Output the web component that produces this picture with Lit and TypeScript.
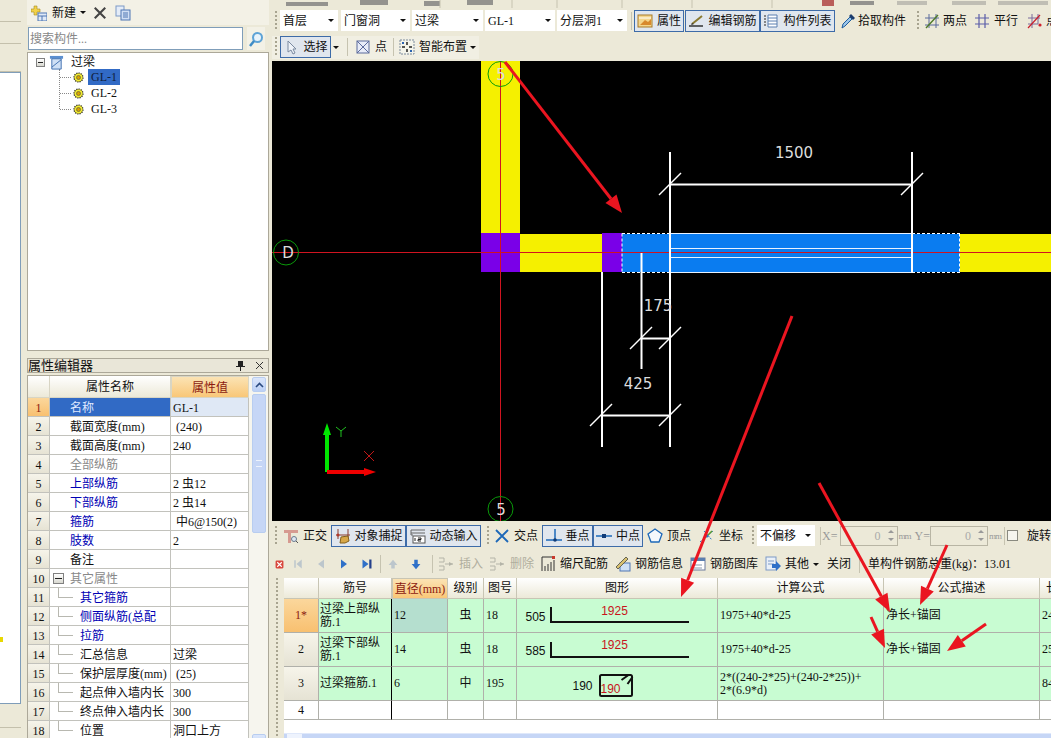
import { LitElement, html, css, svg } from 'lit';
import { customElement } from 'lit/decorators.js';

// small 16x16 toolbar glyphs
const ic = (body: unknown, w = 16, h = 16) => html`<svg class="ic" width=${w} height=${h} viewBox="0 0 16 16">${body}</svg>`;

const icons: Record<string, unknown> = {
  add: svg`<path d="M3 1h3v3h3v3H6v3H3V7H0V4h3z" fill="#f2d24a" stroke="#a58a20" stroke-width=".6"/><rect x="7" y="8" width="9" height="8" fill="#dfe9f7" stroke="#4f77b3"/><path d="M7 11h9M11 11v5" stroke="#4f77b3"/>`,
  del: svg`<path d="M2 2l12 12M14 2L2 14" stroke="#444" stroke-width="2.4"/>`,
  copy: svg`<rect x="1" y="1" width="8" height="10" fill="#e4ecf8" stroke="#7d9ac6"/><rect x="6" y="5" width="9" height="10" fill="#cfdef4" stroke="#4f77b3"/><path d="M8 8h5M8 10h5M8 12h5" stroke="#4f77b3"/>`,
  search: svg`<circle cx="9.500" cy="6.500" r="4.500" fill="#e8f3fb" stroke="#5ea3d6" stroke-width="2"/><path d="M6 10l-4 5" stroke="#3f8cc6" stroke-width="2.500"/>`,
  beam: svg`<rect x="1" y="1" width="14" height="3" fill="#5b8fd0"/><path d="M3 4h10v11H3z" fill="#cfe0f5" stroke="#3f6fb0"/><path d="M3 13L13 5" stroke="#3f6fb0"/>`,
  gear: svg`<circle cx="8" cy="8" r="5.500" fill="#f5ee30" stroke="#333" stroke-width="1.600" stroke-dasharray="1.600 1.200"/><circle cx="8" cy="8" r="2.500" fill="#d8a000" stroke="#554" stroke-width=".8"/>`,
  prop: svg`<rect x="1" y="2" width="14" height="12" fill="#f4d68c" stroke="#a87a28"/><path d="M3 12l5-5 3 2 3-3v6z" fill="#d8892c"/><path d="M2 5h12" stroke="#fff"/>`,
  edit: svg`<path d="M1 13h14" stroke="#333" stroke-width="1.500"/><path d="M4 11L14 3" stroke="#8a7a30" stroke-width="2"/><path d="M3 12l1-2 2 1z" fill="#333"/>`,
  list: svg`<path d="M5 2h9v12H5z" fill="#fff" stroke="#5b7fb0"/><path d="M5 5h9M5 8h9M5 11h9" stroke="#5b7fb0"/><path d="M1 3h2M1 6h2M1 9h2M1 12h2" stroke="#666" stroke-width="1.500"/>`,
  pick: svg`<path d="M2 15l1-4 7-7 2 2-7 7z" fill="#9cc6ea" stroke="#1d5c9c"/><path d="M9 3l2-2 4 4-2 2z" fill="#1d3c6c"/>`,
  twoPt: svg`<path d="M5 1v14M12 1v14M1 5h14M1 12h14" stroke="#5b6a9c"/><path d="M2 15L14 2" stroke="#4f7a28" stroke-width="1.400"/>`,
  parallel: svg`<path d="M5 1v14M11 1v14M1 5h14M1 11h14" stroke="#5b5ea8" stroke-width="1.200"/>`,
  ptAngle: svg`<path d="M5 1v14M11 1v10M1 5h12M1 11h10" stroke="#7a6a9c"/><path d="M1 15L13 2" stroke="#c8202c" stroke-width="1.200"/><circle cx="13" cy="12" r="1.600" fill="#d0202c"/>`,
  cursor: svg`<path d="M5 2v11l3-2 2 4 2-1-2-4h3z" fill="#eef2f8" stroke="#7a8aa0"/>`,
  point: svg`<rect x="2" y="2" width="12" height="12" fill="#e8ecf8" stroke="#5b6a9c"/><path d="M2 2l12 12M14 2L2 14" stroke="#5b6a9c"/>`,
  smart: svg`<rect x="1" y="1" width="14" height="14" fill="#f4f4ea" stroke="#7a8a9c" stroke-dasharray="2 1"/><path d="M8 3v3M8 10v3M3 8h3M10 8h3" stroke="#222" stroke-width="1.500"/><rect x="3" y="3" width="2" height="2" fill="#2a62b0"/><rect x="11" y="11" width="2" height="2" fill="#2a62b0"/>`,
  ortho: svg`<path d="M1 2h14v3H1zM5 5v10h3V5z" fill="#d69a90"/><circle cx="11" cy="11" r="2.500" fill="#dde6f2" stroke="#6a7a8c"/><path d="M13 13l2 2" stroke="#555"/>`,
  snap: svg`<path d="M3 1v10M13 1v10M1 7h14" stroke="#8a3c2c"/><circle cx="3" cy="7" r="1.500" fill="#b03a2c"/><path d="M5 15l1-6 7-1 1 5-4 2z" fill="#d8a848" stroke="#84601c"/>`,
  dyn: svg`<path d="M1 2h14M1 5h14" stroke="#666"/><rect x="3" y="8" width="12" height="7" fill="#fff" stroke="#555"/><path d="M1 2v5h2" stroke="#666" fill="none"/><path d="M5 10v3M8 10h3v1.500H8V13h3" stroke="#222" fill="none"/>`,
  cross: svg`<path d="M2 2l12 12M14 2L2 14" stroke="#1d68b8" stroke-width="1.800"/>`,
  perp: svg`<path d="M0 12h16" stroke="#1d68b8" stroke-width="1.500"/><path d="M9 1v11" stroke="#1d68b8" stroke-width="1.500"/><circle cx="9" cy="12" r="1.800" fill="#123c78"/>`,
  mid: svg`<path d="M0 8h16" stroke="#1d68b8" stroke-width="1.500"/><rect x="6" y="6" width="4" height="4" fill="#123c78"/>`,
  vertex: svg`<path d="M8 1l7 5-3 8H4L1 6z" fill="#f4f8fc" stroke="#1d68b8" stroke-width="1.300"/>`,
  coord: svg`<path d="M1 14L14 3M5 3l8 9" stroke="#2a78c0" stroke-dasharray="2 1"/><path d="M7 9l6-6" stroke="#5b9a2c" stroke-width="1.500"/><circle cx="8" cy="8" r="1.500" fill="#2a78c0"/>`,
  close: svg`<rect x="1" y="1" width="14" height="14" rx="2" fill="#d8463c"/><path d="M4 4l8 8M12 4l-8 8" stroke="#fff" stroke-width="2"/>`,
  first: svg`<path d="M3 3h2v10H3zM13 2v12L6 8z" fill="#bcc6cc"/>`,
  prev: svg`<path d="M12 2v12L4 8z" fill="#bcc6cc"/>`,
  next: svg`<path d="M4 2v12l8-6z" fill="#2f70c8"/>`,
  last: svg`<path d="M2 2v12l8-6z" fill="#2f70c8"/><path d="M11 2h3v12h-3z" fill="#24408c"/>`,
  up: svg`<path d="M8 3l5 6h-3v4H6V9H3z" fill="#bcc6cc"/>`,
  down: svg`<path d="M6 3h4v5h3l-5 6-5-6h3z" fill="#2f70c8"/>`,
  insert: svg`<path d="M1 2h5v4H1M1 10h5v4H1M7 8h8" stroke="#b4b4a8" fill="none"/><path d="M11 6l4 2-4 2z" fill="#b4b4a8"/>`,
  scale: svg`<path d="M2 1h12M2 1v14M5 15v-5M8 15v-7M11 15v-9M14 15V4" stroke="#333"/><rect x="12" y="0" width="3" height="3" fill="#c8382c"/>`,
  info: svg`<rect x="5" y="7" width="10" height="8" fill="#cfe0f5" stroke="#4f77b3"/><path d="M1 11L11 1l2 2L3 13z" fill="#d8c070" stroke="#665"/>`,
  lib: svg`<rect x="1" y="2" width="14" height="12" fill="#fff" stroke="#6a7a9c"/><path d="M1 2h14v3H1z" fill="#5b7fb0"/><path d="M4 9h8M4 12h8" stroke="#8a9ab0"/>`,
  other: svg`<rect x="1" y="1" width="10" height="13" fill="#eaf0f8" stroke="#7d9ac6"/><path d="M3 5h6M3 8h6" stroke="#7d9ac6"/><path d="M7 8h4V5l5 5-5 5v-3H7z" fill="#2f70c8"/>`,
};

const tool = (name: string, label: string, cls = '') =>
  html`<span class="tool ${cls}">${ic(icons[name])}<span>${label}</span></span>`;
const drop = html`<span class="caret"></span>`;
const grip = (cls = '') => html`<span class="grip ${cls}"></span>`;
const sep = (cls = '') => html`<span class="sep ${cls}"></span>`;

type Prop = { no: number; name: string; value?: string; kind?: string; nested?: boolean };
const props: Prop[] = [
  { no: 1, name: '名称', value: 'GL-1' },
  { no: 2, name: '截面宽度(mm)', value: ' (240)' },
  { no: 3, name: '截面高度(mm)', value: '240' },
  { no: 4, name: '全部纵筋', kind: 'mute' },
  { no: 5, name: '上部纵筋', value: '2 虫12', kind: 'blue' },
  { no: 6, name: '下部纵筋', value: '2 虫14', kind: 'blue' },
  { no: 7, name: '箍筋', value: ' 中6@150(2)', kind: 'blue' },
  { no: 8, name: '肢数', value: '2', kind: 'blue' },
  { no: 9, name: '备注' },
  { no: 10, name: '其它属性', kind: 'mute group' },
  { no: 11, name: '其它箍筋', kind: 'blue', nested: true },
  { no: 12, name: '侧面纵筋(总配', kind: 'blue', nested: true },
  { no: 13, name: '拉筋', kind: 'blue', nested: true },
  { no: 14, name: '汇总信息', value: '过梁', nested: true },
  { no: 15, name: '保护层厚度(mm)', value: ' (25)', nested: true },
  { no: 16, name: '起点伸入墙内长', value: '300', nested: true },
  { no: 17, name: '终点伸入墙内长', value: '300', nested: true },
  { no: 18, name: '位置', value: '洞口上方', nested: true },
];

const shape1 = (len: string, y: number) => svg`<svg class="shape" width="200" height="33" viewBox="0 0 199 33">
  <text x="8" y="22" class="st">${len}</text>
  <path d="M33.500 ${y}v15h138" fill="none" stroke="#111" stroke-width="2"/>
  <text x="97" y="16" class="st red" text-anchor="middle">1925</text></svg>`;
const shape2 = svg`<svg class="shape" width="200" height="33" viewBox="0 0 199 33">
  <text x="55" y="23" class="st">190</text>
  <rect x="82.500" y="8" width="32" height="21" rx="1.500" fill="none" stroke="#111" stroke-width="2"/>
  <path d="M104 13l7-5M110 17l5-7" stroke="#111" stroke-width="2"/>
  <text x="83" y="26" class="st red">190</text></svg>`;

type Bar = { no: string; name: string; dia: string; grade: string; fig: string; shape: unknown; formula: string; desc: string; len: string };
const bars: Bar[] = [
  { no: '1*', name: '过梁上部纵筋.1', dia: '12', grade: '虫', fig: '18', shape: shape1('505', 8), formula: '1975+40*d-25', desc: '净长+锚固', len: '24' },
  { no: '2', name: '过梁下部纵筋.1', dia: '14', grade: '虫', fig: '18', shape: shape1('585', 9), formula: '1975+40*d-25', desc: '净长+锚固', len: '25' },
  { no: '3', name: '过梁箍筋.1', dia: '6', grade: '中', fig: '195', shape: shape2, formula: '2*((240-2*25)+(240-2*25))+\n2*(6.9*d)', desc: '', len: '84' },
];

// red annotation arrows, in page coordinates
const arrows = [
  [505, 62, 622, 213],
  [792, 316, 681, 597],
  [819, 483, 890, 612],
  [947, 545, 920, 605],
  [871, 617, 885, 648],
  [986, 624, 947, 651],
];

const arrow = ([x1, y1, x2, y2]: number[]) => {
  const d = Math.hypot(x2 - x1, y2 - y1);
  const ux = (x2 - x1) / d;
  const uy = (y2 - y1) / d;
  const bx = x2 - ux * 18;
  const by = y2 - uy * 18;
  const pts = `${x2},${y2} ${bx - uy * 7},${by + ux * 7} ${bx + uy * 7},${by - ux * 7}`;
  return svg`<line x1=${x1} y1=${y1} x2=${bx} y2=${by} stroke="#ea1520" stroke-width="3"/><polygon points=${pts} fill="#ea1520"/>`;
};

const tick = (x: number, y: number) => svg`<line x1=${x - 11} y1=${y + 11} x2=${x + 11} y2=${y - 11} stroke="#fff" stroke-width="1.500"/>`;

@customElement('app-root')
export class AppRoot extends LitElement {
  static styles = css`
    :host {
      display: flex;
      position: relative;
      width: 1051px;
      height: 738px;
      overflow: hidden;
      background: #ece9d8;
      font: 12px/14px 'Liberation Serif', 'Noto Sans CJK SC', serif;
      color: #111;
    }
    .ic { flex: none; display: block; }
    .rail { width: 21px; flex: none; display: flex; flex-direction: column; }
    .rail-tab { height: 21px; border-bottom: 1px solid #c4c0ac; }
    .rail-tab.tall { height: 27px; }
    .rail-body { height: 632px; background: #fff; border: solid #7f9db9; border-width: 1px 1px 1px 0; box-sizing: border-box; padding-top: 564px; }
    .dot { display: block; width: 3px; height: 5px; background: #e8d800; }
    .rail-foot { height: 23px; border-bottom: 1px solid #c4c0ac; }

    .side { width: 242px; margin-left: 6px; flex: none; display: flex; flex-direction: column; }
    .side-tb { height: 25px; display: flex; align-items: center; padding-left: 4px; background: #f3f1e6; }
    .side-tb .tool { padding: 0; gap: 5px; font-size: 12px; }
    .search { margin-top: 2px; height: 23px; display: flex; align-items: stretch; }
    .search-in { width: 215px; margin-left: 1px; box-sizing: border-box; border: 1px solid #7f9db9; background: #fff; color: #888; padding: 4px 1px; }
    .search-btn { width: 18px; margin-left: 4px; display: flex; align-items: center; justify-content: center; background: #f3f1e6; }
    .tree { margin-top: 2px; height: 299px; box-sizing: border-box; background: #fff; border: 1px solid #aca899; padding: 2px 0 0 8px; }
    .tree-root { display: flex; align-items: center; gap: 4px; height: 14px; }
    .tree-root span:last-child { margin-left: 3px; }
    .minus { width: 9px; height: 9px; box-sizing: border-box; border: 1px solid #808080; background: linear-gradient(#fff, #d8d8d0); position: relative; flex: none; }
    .minus::after { content: ''; position: absolute; left: 1px; right: 1px; top: 3px; height: 1px; background: #222; }
    .tree-kids { margin: 0 0 0 23px; border-left: 1px dotted #888; height: 40px; padding-top: 0; }
    .leaf { display: flex; align-items: center; height: 16px; gap: 3px; padding-left: 12px; position: relative; }
    .leaf::before { content: ''; position: absolute; left: 0; width: 11px; top: 8px; border-top: 1px dotted #888; }
    .leaf b { font-weight: 400; padding: 1px 3px; }
    .leaf b.sel { background: #316ac5; color: #10203c; }

    .prop-head { margin-top: 7px; height: 15px; display: flex; align-items: center; justify-content: space-between; box-sizing: border-box; border: 1px solid #aca899; background: #e9e6d8; font-size: 13px; padding-right: 4px; }
    .prop-head i { font-style: normal; display: flex; gap: 10px; align-items: center; }
    .prop-wrap { margin-top: 2px; flex: 1; min-height: 0; overflow: hidden; display: flex; gap: 3px; box-sizing: border-box; border: solid #aca899; border-width: 1px 1px 0; background: #f6f5ee; }
    table { border-collapse: separate; border-spacing: 0; table-layout: fixed; }
    td, th { padding: 0; font-weight: 400; border: solid #c2c2bc; border-width: 0 1px 1px 0; overflow: hidden; white-space: nowrap; box-sizing: border-box; }
    .pt { width: 221px; background: #fff; flex: none; }
    .pt thead th { height: 22px; background: linear-gradient(#fff, #ece9d8); border-color: #d8d5c4; padding-top: 1px; }
    .pt thead th.on, .gt thead th.on { background: linear-gradient(#fbe3b4, #f9c778); color: #8c1a10; }
    .pt td { height: 19px; padding-top: 2px; }
    .rh { text-align: center; background: linear-gradient(#f6f4ea, #e6e3d4); }
    .rh.cur { background: linear-gradient(#fbd79c, #f8c070); color: #8c1a10; }
    .pt td.nm { padding-left: 20px; position: relative; }
    .pt td.nm.nested { padding-left: 30px; }
    .nm.nested::before { content: ''; position: absolute; left: 8px; top: -1px; bottom: 9px; border-left: 1px solid #b8b8b0; }
    .nm.nested::after { content: ''; position: absolute; left: 8px; width: 15px; top: 9px; border-top: 1px solid #b8b8b0; }
    .nm.blue { color: #0000b4; }
    .nm.mute { color: #888; }
    .nm.group .minus { position: absolute; left: 3px; top: 4px; width: 11px; height: 11px; }
    .nm.group .minus::after { top: 4px; }
    .nm.sel { background: #316ac5; color: #dfe8ff; }
    .pt td.val { padding-left: 2px; white-space: pre; }
    .val.sel { background: #dfe8f5; }
    .sb { width: 14px; flex: none; display: flex; flex-direction: column; padding-top: 1px; }
    .sb-btn { height: 15px; flex: none; border-radius: 2px; border: 1px solid #b8cdf0; box-sizing: border-box; background: linear-gradient(#dbe6fb, #bcd0f5); display: flex; align-items: center; justify-content: center; }
    .sb-thumb { margin-top: 2px; height: 139px; flex: none; box-sizing: border-box; border: 1px solid #b8cdf0; border-radius: 2px; background: #c6d6f6; display: flex; align-items: center; justify-content: center; }
    .sb-thumb span { width: 6px; height: 5px; border: solid #eef3fd; border-width: 1px 0; }
    .sb-gap { flex: none; height: 201px; }

    .main { width: 779px; margin-left: 3px; flex: none; display: flex; flex-direction: column; }
    .clip { height: 8px; flex: none; display: block; }
    .tb { display: flex; align-items: center; flex: none; padding-left: 3px; white-space: nowrap; }
    .tb > span { flex: none; }
    .r1 { height: 25px; }
    .r2 { height: 28px; }
    .r3 { height: 29px; }
    .r4 { height: 28px; padding-left: 3px; }
    .panel { width: 204px; height: 23px; display: flex; align-items: center; background: #f1efe3; margin-left: -3px; padding-left: 3px; }
    .grip { width: 2px; height: 20px; flex: none; background: repeating-linear-gradient(#a8a490 0 2px, transparent 2px 4px); }
    .sep { width: 1px; height: 18px; flex: none; background: #c6c3b0; }
    .sel-box { height: 21px; box-sizing: border-box; flex: none; background: #fff; display: flex; align-items: center; justify-content: space-between; padding: 0 4px 0 3px; font-size: 12px; }
    .w58 { width: 58px; } .w69 { width: 69px; } .w71 { width: 71px; } .w70 { width: 70px; }
    .caret { display: block; width: 0; height: 0; flex: none; border: solid transparent; border-width: 3px 3px 0; border-top-color: #111; }
    .tool { display: inline-flex; align-items: center; gap: 4px; flex: none; white-space: nowrap; }
    .tool.g2 { gap: 2px; }
    .tool.g3 { gap: 3px; }
    .on { box-sizing: border-box; height: 22px; border: 1px solid #3d6ba8; background: #e0e6ee; justify-content: center; }
    .b50 { width: 50px; } .b51 { width: 51px; } .b75 { width: 75px; }
    .ml1 { margin-left: 1px; } .ml2 { margin-left: 2px; } .ml3 { margin-left: 3px; } .ml4 { margin-left: 4px; } .ml5 { margin-left: 5px; }
    .ml6 { margin-left: 6px; } .ml7 { margin-left: 7px; } .ml8 { margin-left: 8px; } .ml9 { margin-left: 9px; } .ml11 { margin-left: 11px; }
    .canvas { width: 779px; height: 460px; flex: none; display: block; background: #000; }
    .cad { font: 15px 'DejaVu Sans', sans-serif; fill: #dcdcdc; }
    .field { width: 58px; height: 20px; box-sizing: border-box; flex: none; border: 1px solid #b8b5a4; color: #aaa; display: flex; align-items: center; justify-content: flex-end; gap: 7px; padding-right: 3px; }
    .spin { display: flex; flex-direction: column; gap: 5px; }
    .spin i { display: block; width: 0; height: 0; border: solid transparent; border-width: 0 3px 3px; border-bottom-color: #999; }
    .spin i + i { border-width: 3px 3px 0; border-top-color: #999; border-bottom-color: transparent; }
    .dim { color: #999; }
    .mm { width: 12px; flex: none; font-size: 9px; letter-spacing: -1px; color: #999; }
    .check { width: 11px; height: 11px; box-sizing: border-box; flex: none; border: 1px solid #8a8a80; background: #f6f5ee; }
    .t-off { color: #b0ae9e; }
    .lower { flex: 1; min-height: 0; display: flex; }
    .lower-grip { width: 12px; flex: none; padding-left: 4px; box-sizing: border-box; }
    .lower-grip span { display: block; width: 2px; height: 100%; background: repeating-linear-gradient(#a8a490 0 2px, transparent 2px 4px); }
    .lower-body { width: 767px; flex: none; background: #fff; overflow: hidden; display: flex; flex-direction: column; }
    .gt { width: 836px; flex: none; }
    .gt th { height: 21px; background: linear-gradient(#fff, #ece9d8); border-color: #c8c5b4; }
    .gt th.len { text-align: left; padding-left: 6px; }
    .gt td { height: 34px; background: #c8fcd2; border-color: #b0b0aa; padding-left: 2px; white-space: pre-line; line-height: 13px; }
    .gt td.name { padding-left: 1px; white-space: normal; }
    .gt tr.empty td { height: 19px; background: #fff; }
    .gt td.rh { background: linear-gradient(#f6f4ea, #e6e3d4); padding: 0; text-align: center; }
    .gt td.rh.cur { background: linear-gradient(#fbd79c, #f8c070); }
    .gt td.dark { border-right-color: #000; }
    .gt td.hi { background: #b5dfcf; }
    .gt td.mid { text-align: center; padding: 0; }
    .gt td.fig { padding: 0; }
    .shape { display: block; }
    .st { font: 12px 'Liberation Sans', sans-serif; fill: #111; }
    .st.red { fill: #c8141c; }
    .fill { flex: 1; }
    .hbar { height: 4px; flex: none; display: flex; padding-left: 3px; background: #c6d6f6; border-top: 1px solid #dfe8fa; }
    .hbar span { width: 15px; background: #eef3fd; }
    .over { position: absolute; left: 0; top: 0; pointer-events: none; }
  `;

  renderProps() {
    return props.map((p, i) => {
      const first = i === 0;
      return html`<tr>
        <td class="rh ${first ? 'cur' : ''}">${p.no}</td>
        <td class="nm ${p.kind ?? ''} ${p.nested ? 'nested' : ''} ${first ? 'sel' : ''}">
          ${p.kind?.includes('group') ? html`<span class="minus"></span>` : ''}${p.name}
        </td>
        <td class="val ${first ? 'sel' : ''}">${p.value ?? ''}</td>
      </tr>`;
    });
  }

  renderBars() {
    return bars.map((b, i) => html`<tr>
      <td class="rh ${i === 0 ? 'cur' : ''}">${b.no}</td>
      <td class="dark name">${b.name}</td>
      <td class=${i === 0 ? 'hi' : ''}>${b.dia}</td>
      <td class="mid">${b.grade}</td>
      <td>${b.fig}</td>
      <td class="fig">${b.shape}</td>
      <td>${b.formula}</td>
      <td>${b.desc}</td>
      <td>${b.len}</td>
    </tr>`);
  }

  renderCanvas() {
    return html`<svg class="canvas" viewBox="272 61 779 460" width="779" height="460">
      <rect x="481" y="61" width="39" height="172" fill="#f5f000"/>
      <rect x="520" y="234" width="82" height="38" fill="#f5f000"/>
      <rect x="960" y="234" width="91" height="38" fill="#f5f000"/>
      <rect x="481" y="233" width="39" height="39" fill="#7a00e8"/>
      <rect x="602" y="233" width="20" height="39" fill="#7a00e8"/>
      <rect x="622" y="234" width="338" height="38" fill="#0a7cf0"/>
      <path d="M622 233.500h48M622 272.500h48M622 233.500v39M912 233.500h48M912 272.500h48M959.500 233.500v39" stroke="#fff" stroke-dasharray="3 2" fill="none"/>
      <path d="M670 233.500h242M670 248.500h242M670 257.500h242M670 272.500h242" stroke="#e8f2ff" fill="none"/>
      <path d="M272 252.500h779M500.500 61v460" stroke="#d01420" fill="none"/>
      <g fill="none" stroke="#0a9a0a">
        <circle cx="500.500" cy="74" r="12.500"/>
        <circle cx="500.500" cy="509" r="12.500"/>
        <circle cx="286" cy="252.500" r="12.500"/>
      </g>
      <text x="501" y="80" class="cad" text-anchor="middle">5</text>
      <text x="501" y="515" class="cad" text-anchor="middle">5</text>
      <text x="288" y="258" class="cad" text-anchor="middle">D</text>
      <g stroke="#fff" stroke-width="2" fill="none">
        <path d="M670 152v295M912 152v120M670 184.500h242M602 272v175M641.500 253v116M641 338.500h29M602 415.500h68"/>
      </g>
      ${tick(670, 184)}${tick(912, 184)}${tick(641, 338)}${tick(670, 338)}${tick(601, 415)}${tick(670, 415)}
      <text x="794" y="158" class="cad" text-anchor="middle">1500</text>
      <text x="658" y="311" class="cad" text-anchor="middle">175</text>
      <text x="638" y="389" class="cad" text-anchor="middle">425</text>
      <path d="M327 472v-40" stroke="#00e600" stroke-width="4"/>
      <path d="M327 423l4 12h-8z" fill="#00e600"/>
      <path d="M327 472h40" stroke="#f00000" stroke-width="4"/>
      <path d="M376 472l-12 4v-8z" fill="#f00000"/>
      <path d="M336 427l5 4 5-4M341 431v6" stroke="#20c020" fill="none"/>
      <path d="M364 451l10 10M374 451l-10 10" stroke="#c01818" fill="none"/>
    </svg>`;
  }

  render() {
    return html`
      <div class="rail">
        <div class="rail-tab"></div>
        <div class="rail-tab"></div>
        <div class="rail-tab tall"></div>
        <div class="rail-body"><span class="dot"></span></div>
        <div class="rail-foot"></div>
      </div>

      <div class="side">
        <div class="side-tb">
          <span class="tool">${ic(icons.add)}<span>新建</span></span>
          <span class="ml4">${drop}</span>
          <span class="ml7">${ic(icons.del, 14, 14)}</span>
          <span class="ml8">${ic(icons.copy)}</span>
        </div>
        <div class="search">
          <div class="search-in">搜索构件...</div>
          <div class="search-btn">${ic(icons.search)}</div>
        </div>
        <div class="tree">
          <div class="tree-root"><span class="minus"></span>${ic(icons.beam, 15, 15)}<span>过梁</span></div>
          <div class="tree-kids">
            <div class="leaf">${ic(icons.gear, 13, 13)}<b class="sel">GL-1</b></div>
            <div class="leaf">${ic(icons.gear, 13, 13)}<b>GL-2</b></div>
            <div class="leaf">${ic(icons.gear, 13, 13)}<b>GL-3</b></div>
          </div>
        </div>
        <div class="prop-head">
          <span>属性编辑器</span>
          <i>
            <svg width="9" height="11" viewBox="0 0 9 11"><path d="M2 1h5v5h2v1H5v4H4V7H0V6h2z" fill="#222"/></svg>
            <svg width="9" height="9" viewBox="0 0 9 9"><path d="M1 1l7 7M8 1L1 8" stroke="#333"/></svg>
          </i>
        </div>
        <div class="prop-wrap">
          <table class="pt">
            <colgroup><col width="22" /><col width="121" /><col width="78" /></colgroup>
            <thead><tr><th></th><th>属性名称</th><th class="on">属性值</th></tr></thead>
            <tbody>${this.renderProps()}</tbody>
          </table>
          <div class="sb">
            <div class="sb-btn"><svg width="9" height="6" viewBox="0 0 9 6"><path d="M1 5l3.500-3.500L8 5" fill="none" stroke="#2a4a80" stroke-width="1.600"/></svg></div>
            <div class="sb-thumb"><span></span></div>
            <div class="sb-gap"></div>
            <div class="sb-btn"></div>
          </div>
        </div>
      </div>

      <div class="main">
        <svg class="clip" width="779" height="8" viewBox="0 0 779 8">
          <g fill="#777" opacity=".75">
            <rect x="14" y="2" width="42" height="4"/><rect x="88" y="0" width="28" height="5"/>
            <rect x="152" y="1" width="16" height="5"/><rect x="195" y="0" width="26" height="5"/>
            <rect x="550" y="0" width="12" height="6" fill="#a83030"/><rect x="578" y="1" width="24" height="4"/>
            <rect x="625" y="1" width="30" height="4" opacity=".5"/><rect x="680" y="1" width="34" height="4" opacity=".5"/>
            <rect x="726" y="1" width="50" height="4" opacity=".5"/>
          </g>
          <path d="M168 0v8M240 0v8M285 0v8M350 0v8M420 0v8M500 0v8" stroke="#c6c3b0"/>
        </svg>

        <div class="tb r1">
          ${grip()}
          <span class="sel-box w58 ml3">首层${drop}</span>
          <span class="sel-box w69 ml3">门窗洞${drop}</span>
          <span class="sel-box w71 ml2">过梁${drop}</span>
          <span class="sel-box w70 ml2">GL-1${drop}</span>
          <span class="sel-box w70 ml2">分层洞1${drop}</span>
          ${sep('ml4')}
          ${tool('prop', '属性', 'on b50 ml2')}
          ${tool('edit', '编辑钢筋', 'on b75 ml1')}
          ${tool('list', '构件列表', 'on b75')}
          ${tool('pick', '拾取构件', 'ml5 g2')}
          ${grip('ml11')}
          ${tool('twoPt', '两点', 'ml5 g3')}
          ${tool('parallel', '平行', 'ml7')}
          ${tool('ptAngle', '点', 'ml9 g3')}
        </div>

        <div class="tb r2">
          <div class="panel">
            ${grip()}
            ${tool('cursor', '选择', 'on b51 ml3')}
            <span class="ml2">${drop}</span>
            ${sep('ml8')}
            ${tool('point', '点', 'ml7')}
            ${sep('ml6')}
            ${tool('smart', '智能布置', 'ml5')}
            <span class="ml3">${drop}</span>
          </div>
        </div>

        ${this.renderCanvas()}

        <div class="tb r3">
          ${grip()}
          ${tool('ortho', '正交', 'ml6')}
          ${tool('snap', '对象捕捉', 'on b75 ml4')}
          ${tool('dyn', '动态输入', 'on b75')}
          ${grip('ml6')}
          ${tool('cross', '交点', 'ml5')}
          ${tool('perp', '垂点', 'on b51 ml4')}
          ${tool('mid', '中点', 'on b50')}
          ${tool('vertex', '顶点', 'ml4')}
          ${tool('coord', '坐标', 'ml8')}
          ${grip('ml9')}
          <span class="sel-box w58 ml3">不偏移${drop}</span>
          ${sep('ml5')}
          <span class="dim ml1">X=</span>
          <span class="field ml2">0<span class="spin"><i></i><i></i></span></span>
          <span class="mm ml1">mm</span>
          <span class="dim ml4">Y=</span>
          <span class="field">0<span class="spin"><i></i><i></i></span></span>
          <span class="mm ml1">mm</span>
          ${sep('ml3')}
          <span class="check ml2"></span>
          <span class="ml9">旋转</span>
        </div>

        <div class="tb r4">
          ${ic(icons.close, 9, 9)}
          <span class="ml8">${ic(icons.first, 12, 12)}</span>
          <span class="ml11">${ic(icons.prev, 12, 12)}</span>
          <span class="ml11">${ic(icons.next, 12, 12)}</span>
          <span class="ml11">${ic(icons.last, 12, 12)}</span>
          ${sep('ml7')}
          <span class="ml5">${ic(icons.up, 14, 14)}</span>
          <span class="ml9">${ic(icons.down, 14, 14)}</span>
          ${sep('ml9')}
          <span class="tool t-off ml4">${ic(icons.insert, 18, 16)}<span>插入</span></span>
          <span class="tool t-off ml5">${ic(icons.insert, 18, 16)}<span>删除</span></span>
          ${tool('scale', '缩尺配筋', 'ml6')}
          ${tool('info', '钢筋信息', 'ml7')}
          ${tool('lib', '钢筋图库', 'ml7')}
          ${tool('other', '其他', 'ml7')}
          <span class="ml4">${drop}</span>
          <span class="ml8">关闭</span>
          ${sep('ml8')}
          <span class="ml8">单构件钢筋总重(kg)：13.01</span>
        </div>

        <div class="lower">
          <div class="lower-grip"><span></span></div>
          <div class="lower-body">
            <table class="gt">
              <colgroup>
                <col width="35" /><col width="73" /><col width="56" /><col width="36" /><col width="33" />
                <col width="201" /><col width="166" /><col width="156" /><col width="80" />
              </colgroup>
              <thead>
                <tr>
                  <th></th><th>筋号</th><th class="on">直径(mm)</th><th>级别</th><th>图号</th>
                  <th>图形</th><th>计算公式</th><th>公式描述</th><th class="len">长度</th>
                </tr>
              </thead>
              <tbody>
                ${this.renderBars()}
                <tr class="empty">
                  <td class="rh">4</td><td class="dark"></td><td></td><td></td><td></td><td></td><td></td><td></td><td></td>
                </tr>
              </tbody>
            </table>
            <div class="fill"></div>
            <div class="hbar"><span></span></div>
          </div>
        </div>
      </div>

      <svg class="over" width="1051" height="738" viewBox="0 0 1051 738">${arrows.map(arrow)}</svg>
    `;
  }
}
